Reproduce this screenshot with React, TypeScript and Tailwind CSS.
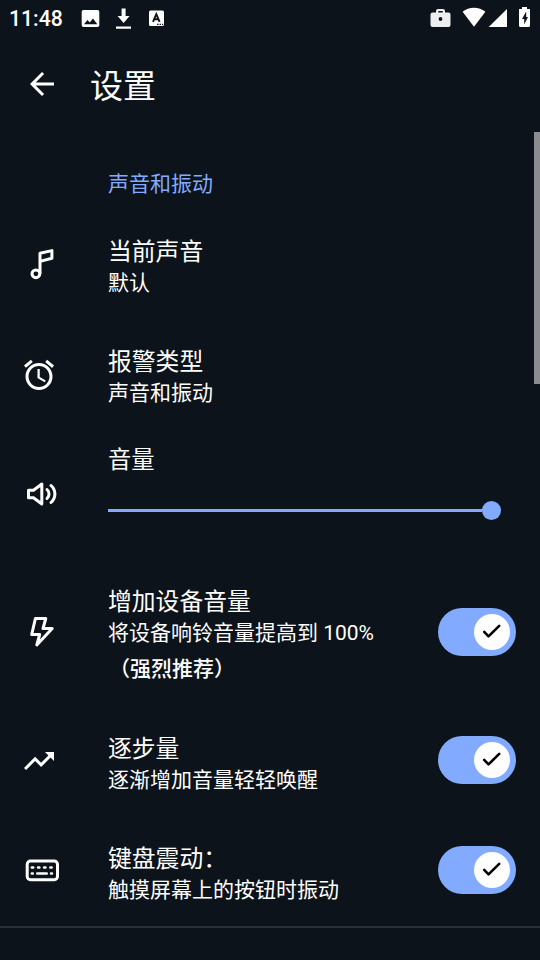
import type { ReactNode } from 'react';
import { MdAlarm, MdArrowBack, MdTrendingUp } from 'react-icons/md';

function StatusBar() {
  return (
    <div className="flex h-9 items-center pl-[9px]">
      <span className="w-[72px] pt-px text-[21.2px] leading-9 font-medium">11:48</span>
      <svg className="h-9 w-[90px]" viewBox="81 0 90 36" fill="currentColor">
        <path
          fillRule="evenodd"
          d="M83.500 10h14a1.800 1.800 0 0 1 1.800 1.800v13.400a1.800 1.800 0 0 1-1.800 1.800h-14a1.800 1.800 0 0 1-1.800-1.800v-13.400a1.800 1.800 0 0 1 1.800-1.800zM84 24.300h13.300l-4.300-5.800-3.200 4.100-2.300-2.700z"
        />
        <path d="M121.600 8.500h4v7.500h4l-6 7-6-7h4zM116 26.500h15v2.200h-15z" />
        <rect x="149" y="10.500" width="15" height="15.500" rx="1.500" />
        <path d="M153 21.800l3.300-7.600 3.300 7.600M154.300 19.300h4" fill="none" stroke="#0c131a" strokeWidth="1.900" />
        <path d="M157 23.700h1.500v1.300h-1.500zM159.500 23.700h1.500v1.300h-1.500zM162 23.700h1.200v1.300h-1.200z" fill="#0c131a" />
      </svg>
      <svg className="ml-auto h-9 w-[112px]" viewBox="428 0 112 36" fill="currentColor">
        <path
          fillRule="evenodd"
          d="M432.500 12.500h3.500v-1.500a2 2 0 0 1 2-2h5a2 2 0 0 1 2 2v1.500h3.500a2 2 0 0 1 2 2v10.500a2 2 0 0 1-2 2h-16a2 2 0 0 1-2-2v-10.500a2 2 0 0 1 2-2zM438.300 11v1.500h4.400v-1.500zM440.500 17.100a1.900 1.900 0 1 0 0 3.800 1.900 1.900 0 0 0 0-3.800z"
          opacity="0.93"
        />
        <path d="M462.600 11.800a18.500 18.500 0 0 1 22.800 0L474 26.800z" />
        <path d="M507 9v18h-18.300z" />
        <path d="M522 7h5v2h3v16.500a1.500 1.500 0 0 1-1.500 1.500h-8a1.500 1.500 0 0 1-1.500-1.500v-16.500h3z" />
        <path d="M526.200 11.500l-4.200 7.500h2.200v5.500l3.800-7.500h-1.800z" fill="#0c131a" />
      </svg>
    </div>
  );
}

function MusicIcon() {
  return (
    <svg className="size-12" viewBox="0 0 48 48" fill="none" stroke="currentColor" strokeWidth="3" strokeLinejoin="round">
      <circle cx="19.900" cy="33.800" r="3.900" />
      <path d="M24 34V13.200L35.900 10.600V18.200L24 21.400" />
    </svg>
  );
}

function VolumeIcon() {
  return (
    <svg className="size-12" viewBox="0 0 48 48" fill="none" stroke="currentColor" strokeWidth="3">
      <path d="M12.500 20.200h5l8.300-6.200v20l-8.300-6.200h-5z" strokeLinejoin="round" />
      <path d="M31 19.500c2.700 2.600 2.700 6.400 0 9M35 15.500c5.200 4.700 5.200 12.300 0 17" strokeLinecap="round" />
    </svg>
  );
}

function BoltIcon() {
  return (
    <svg className="size-12" viewBox="0 0 48 48" fill="none" stroke="currentColor" strokeWidth="3" strokeLinejoin="round">
      <path d="M19.400 10.500H29.800L27 20.500H36.200L20.800 37 23.700 26.500H15.700z" />
    </svg>
  );
}

function KeyboardIcon() {
  return (
    <svg className="size-12" viewBox="0 0 48 48" fill="none" stroke="currentColor" strokeWidth="3">
      <rect x="11.200" y="15.100" width="30.300" height="18.600" rx="3.200" />
      <path
        d="M15.900 21.500h1.200M22.100 21.500h1.200M28.200 21.500h1.200M34.400 21.500h1.200M15.900 27.500h.8M21.300 27.500h9.400M35.100 27.500h.8"
        strokeWidth="2.700"
        strokeLinecap="round"
      />
    </svg>
  );
}

function Toggle() {
  return (
    <button className="flex h-12 w-[78px] shrink-0 items-center justify-end rounded-full bg-[#82aaff] pr-[6px]">
      <span className="flex size-9 items-center justify-center rounded-full bg-white">
        <svg className="size-9" viewBox="0 0 36 36" fill="none" stroke="#000" strokeWidth="2.600" strokeLinecap="round" strokeLinejoin="round">
          <path d="M10.200 17.900l4.300 4.500 10.700-10.500" />
        </svg>
      </span>
    </button>
  );
}

type SettingRowProps = {
  icon: ReactNode;
  title: string;
  description: string;
  note?: string;
  toggle?: boolean;
  className?: string;
  textClassName?: string;
};

function SettingRow({ icon, title, description, note, toggle, className = '', textClassName = 'pt-1' }: SettingRowProps) {
  return (
    <div className={`flex items-center pr-6 ${className}`}>
      <div className="flex w-[108px] shrink-0 pl-4">{icon}</div>
      <div className={`flex-1 whitespace-nowrap ${textClassName}`}>
        <div className="text-[23.8px] leading-[34px]">{title}</div>
        <div className="text-[21px] leading-7">{description}</div>
        {note && <div className="pl-px text-[21px] leading-11 font-medium">{note}</div>}
      </div>
      {toggle && <Toggle />}
    </div>
  );
}

export default function App() {
  return (
    <div className="relative h-[960px] w-[540px] overflow-hidden bg-[#0c131a] font-['Roboto','Noto_Sans_CJK_SC',sans-serif] text-white">
      <StatusBar />
      <header className="flex h-24 items-center pl-6">
        <MdArrowBack className="size-9" />
        <h1 className="ml-[30px] pt-[5px] text-[33px] leading-10">设置</h1>
      </header>

      <main>
        <h2 className="pt-9 pl-[108px] text-[21px] leading-8 text-[#82aaff]">声音和振动</h2>
        <SettingRow className="mt-[31px]" icon={<MusicIcon />} title="当前声音" description="默认" />
        <SettingRow
          className="mt-11"
          icon={<MdAlarm className="mt-0.5 ml-[5px] size-9" />}
          title="报警类型"
          description="声音和振动"
        />

        <div className="mt-[35px] flex h-[104px] items-center">
          <div className="w-[108px] shrink-0 pl-4">
            <VolumeIcon />
          </div>
          <div className="h-full w-[393px]">
            <div className="pt-0.5 text-[23.3px] leading-8">音量</div>
            <div className="mt-[25px] flex h-[19px] items-center">
              <div className="h-[3px] flex-1 bg-[#82aaff]" />
              <div className="size-[19px] rounded-full bg-[#82aaff]" />
            </div>
          </div>
        </div>

        <SettingRow
          className="mt-[27px]"
          textClassName="pt-3"
          icon={<BoltIcon />}
          title="增加设备音量"
          description="将设备响铃音量提高到 100%"
          note="（强烈推荐）"
          toggle
        />
        <SettingRow
          className="mt-[35px]"
          textClassName="pt-1.5"
          icon={<MdTrendingUp className="mt-0.5 ml-[5px] size-9" />}
          title="逐步量"
          description="逐渐增加音量轻轻唤醒"
          toggle
        />
        <SettingRow
          className="mt-[42px]"
          textClassName="pt-1.5"
          icon={<KeyboardIcon />}
          title="键盘震动："
          description="触摸屏幕上的按钮时振动"
          toggle
        />
        <div className="mt-[22px] h-[2px] bg-[#2b2f37]" />
      </main>

      {/* scrollbar thumb over the list */}
      <div className="absolute top-[132px] right-0 h-[252px] w-[6px] bg-[#8a8c8e]" />
    </div>
  );
}
